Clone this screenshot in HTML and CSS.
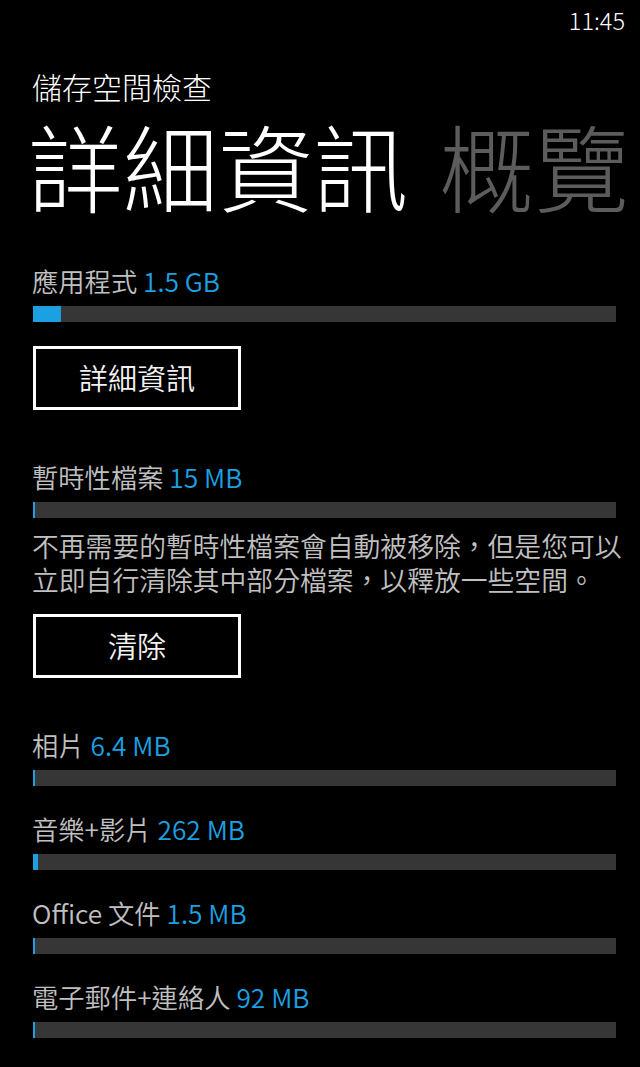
FILE: index.html
```html
<!DOCTYPE html>
<html lang="zh-Hant">
<head>
<meta charset="utf-8">
<title>儲存空間檢查</title>
<link rel="stylesheet" href="styles.css">
</head>
<body>
<div class="statusbar"><span class="time">11:45</span></div>
<header class="header">
  <div class="app-title">儲存空間檢查</div>
  <div class="pivot">
    <span class="pivot-item active">詳細資訊</span>
    <span class="pivot-item">概覽</span>
  </div>
</header>
<main class="content">
  <section class="item">
    <div class="label">應用程式 <span class="value">1.5 GB</span></div>
    <div class="bar"><div class="fill" style="width:28px"></div></div>
  </section>
  <button class="btn btn-first">詳細資訊</button>

  <section class="item item-temp">
    <div class="label">暫時性檔案 <span class="value">15 MB</span></div>
    <div class="bar"><div class="fill" style="width:2px"></div></div>
  </section>
  <p class="desc">不再需要的暫時性檔案會自動被移除，但是您可以<br>立即自行清除其中部分檔案，以釋放一些空間。</p>
  <button class="btn">清除</button>

  <section class="item item-after">
    <div class="label">相片 <span class="value">6.4 MB</span></div>
    <div class="bar"><div class="fill" style="width:2px"></div></div>
  </section>
  <section class="item">
    <div class="label">音樂+影片 <span class="value">262 MB</span></div>
    <div class="bar"><div class="fill" style="width:5px"></div></div>
  </section>
  <section class="item">
    <div class="label">Office 文件 <span class="value">1.5 MB</span></div>
    <div class="bar"><div class="fill" style="width:2px"></div></div>
  </section>
  <section class="item">
    <div class="label">電子郵件+連絡人 <span class="value">92 MB</span></div>
    <div class="bar"><div class="fill" style="width:2px"></div></div>
  </section>
</main>
</body>
</html>
```
FILE: styles.css
```css
* { box-sizing: border-box; }
html, body {
  margin: 0;
  padding: 0;
  background: #000;
  color: #fff;
  font-family: "Noto Sans CJK TC", "Noto Sans CJK SC", sans-serif;
  width: 640px;
  height: 1067px;
  overflow: hidden;
}
.statusbar {
  display: flex;
  justify-content: flex-end;
  padding: 4px 15px 0 0;
  height: 40px;
}
.time {
  font-size: 23.5px;
  line-height: 32px;
  color: #fff;
  font-weight: 300;
}
.header {
  padding-left: 32px;
}
.app-title {
  font-size: 30px;
  line-height: 40px;
  margin-top: 26px;
  color: #fff;
  font-weight: 300;
}
.pivot {
  display: flex;
  gap: 31px;
  white-space: nowrap;
  margin-left: -4px;
  margin-top: 4px;
}
.pivot-item {
  font-size: 95px;
  line-height: 110px;
  color: #5c5c5c;
  font-weight: 300;
}
.pivot-item.active { color: #fff; }

.content {
  padding: 0 24px 0 33px;
}
.item { margin-top: 25px; }
.item:first-child { margin-top: 43px; }
.label {
  font-size: 26.3px;
  line-height: 36px;
  color: #c0c0c0;
  margin-left: -1px;
  white-space: nowrap;
  font-weight: 350;
}
.value { color: #1ba1e2; }
.bar {
  margin-top: 7px;
  height: 16px;
  background: #363636;
  display: flex;
}
.fill { background: #1ba1e2; height: 100%; }

.btn {
  display: flex;
  align-items: center;
  justify-content: center;
  width: 208px;
  height: 64px;
  margin: 24px 0 0 0;
  padding: 0 0 2px 0;
  background: #000;
  border: 3px solid #fff;
  color: #f2f2f2;
  font-family: inherit;
  font-size: 29px;
  font-weight: 350;
}
.item-temp { margin-top: 49px; }
.desc {
  margin: 11px -20px 0 -1px;
  font-size: 26.8px;
  line-height: 33.5px;
  color: #c0c0c0;
  white-space: nowrap;
  font-weight: 350;
}
.desc + .btn { margin-top: 18px; }
.item-after { margin-top: 49px; }
```
